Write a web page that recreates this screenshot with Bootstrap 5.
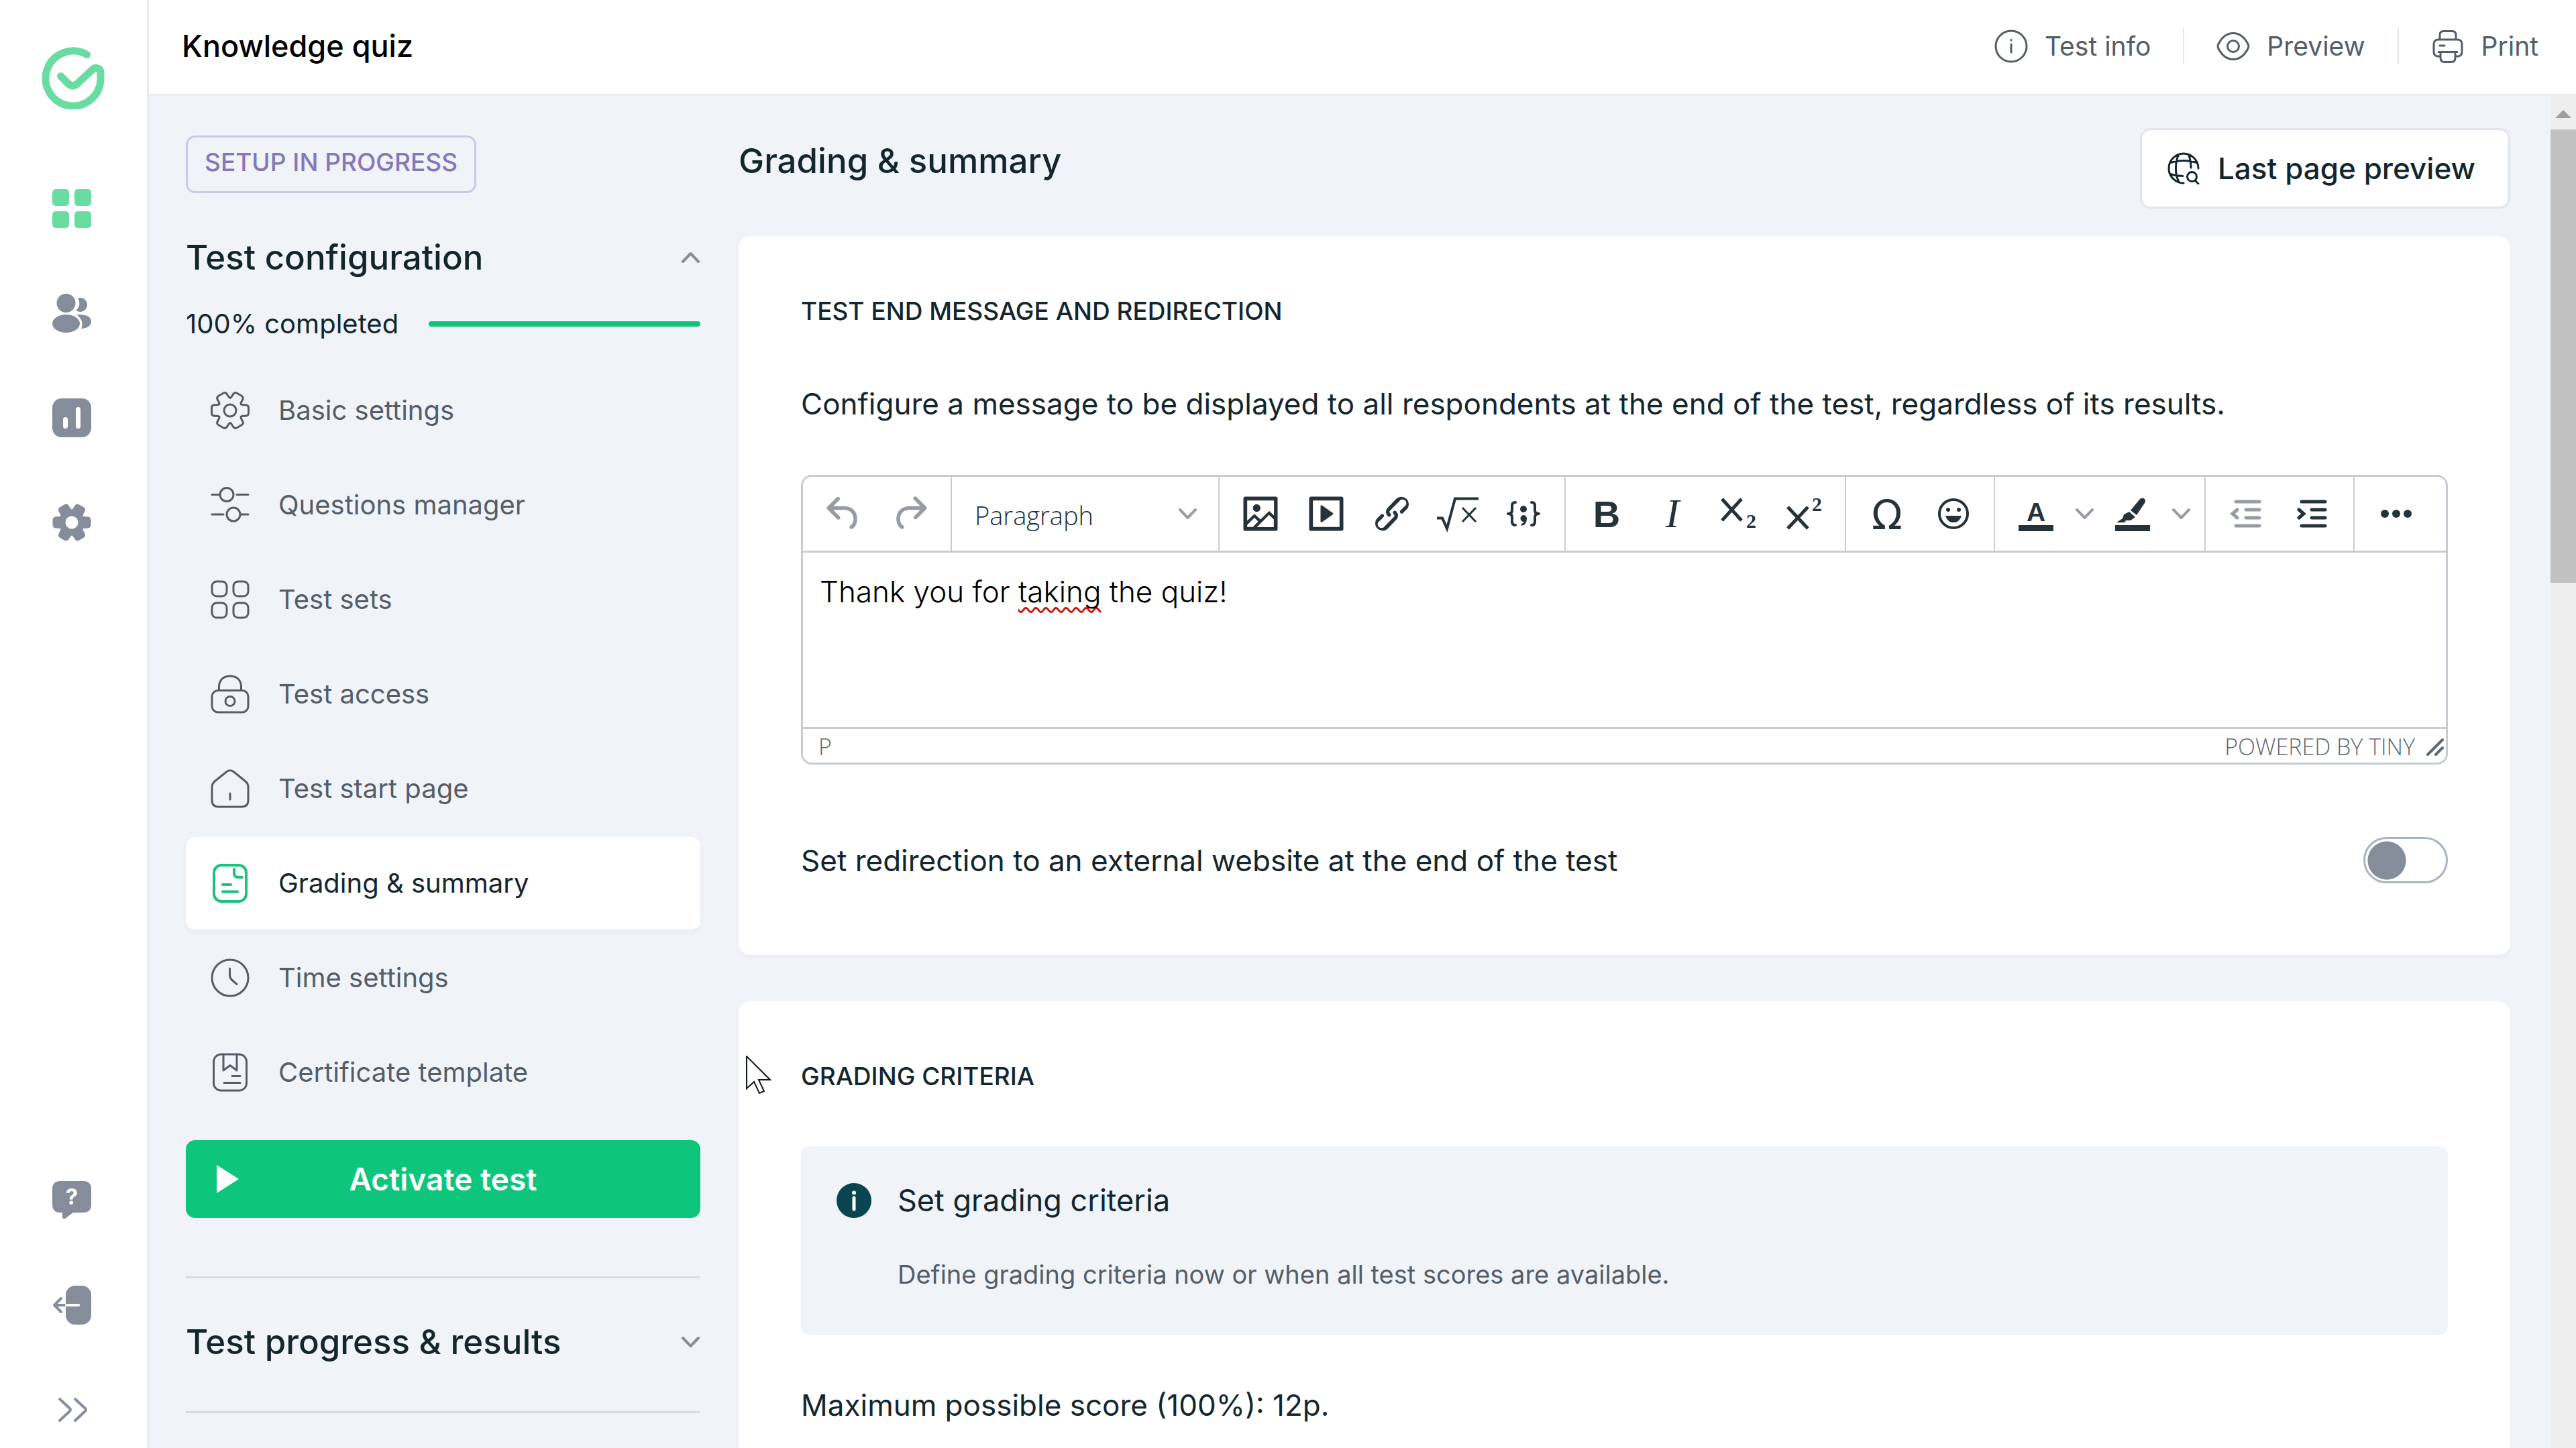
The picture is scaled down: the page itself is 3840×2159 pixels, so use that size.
<!DOCTYPE html>
<html lang="en">
<head>
<meta charset="utf-8">
<meta name="viewport" content="width=device-width, initial-scale=1">
<title>Knowledge quiz – Grading &amp; summary</title>
<link rel="stylesheet" href="https://cdn.jsdelivr.net/npm/bootstrap@5.3.0/dist/css/bootstrap.min.css">
<style>
:root { --ink:#14262d; --muted:#545d68; --grey:#858d9a; --green:#0dc57b; --mint:#69dca1; --page:#f0f4f9; --line:#c8ccd2; }
body { font-family: Inter, "Liberation Sans", sans-serif; font-size: 44px; line-height: 64px; color: var(--ink); background: var(--page); }
a { color: inherit; text-decoration: none; }
svg { display: block; flex: none; }
.ln { fill: none; stroke: currentColor; stroke-width: 3; stroke-linecap: round; stroke-linejoin: round; }

/* icon rail */
.rail { width: 222px; background: #fff; border-right: 3px solid #e9ecef; padding: 70px 0 28px; color: var(--grey); }
.rail-logo { margin-left: 63px; margin-bottom: 119px; color: var(--mint); }
.rail-list { gap: 98px; padding-left: 78px; }
.rail-list a.on { color: var(--mint); }

/* top bar */
.topbar { height: 143px; background: #fff; border-bottom: 3px solid #e9edf2; padding: 0 56px 3px 49px; }
.quiz-name { font-size: 45px; font-weight: 500; line-height: 64px; color: #000; margin: 0; }
.top-links { color: var(--muted); font-size: 39px; gap: 48px; }
.top-links a { gap: 25px; }
.top-links .sep { width: 2px; height: 54px; background: #dfe6ea; }

/* configuration column */
.side { width: 767px; margin: 59px 57px 0 55px; }
.state { border: 3px solid #c6cce5; border-radius: 14px; color: #8577b8; font-size: 37px; font-weight: 500; line-height: 38px; padding: 18px 25px 24px; }
.fold { font-size: 51px; font-weight: 500; line-height: 64px; background: none; border: 0; padding: 0; color: var(--ink); }
.fold svg { color: var(--grey); }
.done { margin-top: 43px; font-size: 40px; line-height: 48px; gap: 45px; }
.done .progress { height: 8px; border-radius: 4px; --bs-progress-bar-bg: #12c57c; background: #dde3ea; }
.menu { margin-top: 36px; gap: 3px; }
.menu a { height: 138px; padding-left: 37px; gap: 43px; border-radius: 14px; color: var(--muted); font-size: 40px; }
.menu a.active { background: #fff; color: var(--ink); box-shadow: 0 4px 10px rgba(30,50,90,.04); }
.menu a.active svg { color: #17c37d; stroke-width: 4; }
.go { height: 116px; margin-top: 32px; border: 0; border-radius: 14px; background: var(--green); color: #fff; font-size: 46px; font-weight: 600; display: grid; grid-template-columns: 45px 1fr 45px; align-items: center; padding: 0 45px 0 45px; }
.rule { height: 3px; background: #d6dde2; }

/* main column */
.work { margin: 48px 60px 0 0; }
.page-title { font-size: 51px; font-weight: 500; line-height: 64px; margin: 17px 0 0; }
.last-page { height: 120px; padding: 0 49px 0 38px; gap: 27px; border: 3px solid #dfe5eb; border-radius: 16px; background: #fff; font-size: 44px; font-weight: 500; color: var(--ink); }
.panel { background: #fff; border-radius: 18px; padding: 80px 93px 107px; box-shadow: 0 5px 6px rgba(60,60,60,.03); }
.panel h2 { font-size: 37px; font-weight: 500; line-height: 64px; margin: 0; }
.panel p { margin: 0; }

/* editor */
.editor { border: 3px solid var(--line); border-radius: 16px; font-family: "Open Sans", "Noto Sans", sans-serif; color: #222f3e; }
.tools { height: 113px; border-bottom: 3px solid var(--line); }
.tools > div { padding: 0 12px; border-right: 2px solid var(--line); color: #25323a; }
.tools > div:last-child { border: 0; }
.tools button { width: 98px; height: 98px; border: 0; background: none; padding: 0; color: inherit; display: flex; align-items: center; justify-content: center; }
.tools button.drop { width: 46px; }
.tools .off, .tools .drop { color: #979ca2; }
.tools select { width: 397px; height: 98px; border: 0; background: none; appearance: none; padding: 4px 34px 0; font-size: 38px; font-weight: 300; color: #222f3e; }
.tools .pick { padding: 0; }
.pick label { display: grid; align-items: center; }
.pick label > * { grid-area: 1 / 1; }
.pick label svg { justify-self: end; margin-right: 31px; color: #979ca2; pointer-events: none; }
.text-area { height: 263px; padding: 26px 25px; font: 300 44px/64px Inter, sans-serif; color: #000; border-bottom: 3px solid var(--line); outline: 0; }
.typo { text-decoration: underline wavy #c4190f 3px; text-underline-offset: 7px; text-decoration-skip-ink: none; }
.status { height: 50px; padding: 2px 2px 0 23px; font-size: 34px; font-weight: 300; line-height: 48px; color: #5e6873; }

.turn { min-height: 69px; }
.turn .form-check-input { width: 126px; height: 69px; margin: 0; border: 3px solid #a9b3c3; border-radius: 35px; background: radial-gradient(circle, #858c9a 28px, transparent 29px) 3px center / 58px 58px no-repeat; }
.note { background: var(--page); border-radius: 14px; padding: 49px 53px 59px; gap: 39px; }
.note svg { margin-top: 6px; }
.note h3 { font-size: 45px; font-weight: 400; line-height: 64px; margin: 0 0 46px; }
.note p { font-size: 38px; color: var(--muted); }

/* scroll bar */
.bar { width: 38px; background: #eee; }
.bar svg { margin: 21px auto 5px; }
.bar .thumb { height: 676px; background: #c1c1c1; }
.pointer-arrow { position: absolute; left: 1112px; top: 1574px; }
</style>
<script src="https://cdn.jsdelivr.net/npm/bootstrap@5.3.0/dist/js/bootstrap.bundle.min.js"></script>
</head>
<body>
<svg width="0" height="0" class="position-absolute" aria-hidden="true">
  <defs>
    <path id="tooth" d="M16.2-9.3Q17.500-8.2 20-8.2H22.500Q27.500-8.2 27.500-4V4Q27.500 8.2 22.500 8.2H20Q17.500 8.2 16.2 9.3"/>
    <path id="wedge" d="M0 0L16.2-9.3Q17.500-8.2 20-8.2H22.500Q28-8.2 28-4V4Q28 8.2 22.500 8.2H20Q17.500 8.2 16.2 9.3Z"/>
    <path id="down" d="M3 3L14.500 15 26 3" fill="none" stroke="currentColor" stroke-width="4" stroke-linecap="round" stroke-linejoin="round"/>
  </defs>
</svg>

<div class="d-flex vh-100 overflow-hidden position-relative">
  <nav class="rail d-flex flex-column flex-shrink-0" aria-label="Main">
    <a class="rail-logo" href="#" aria-label="Home">
      <svg width="93" height="93" viewBox="0 0 93 93" fill="none" stroke="currentColor" stroke-width="11" stroke-linecap="round" stroke-linejoin="round"><path d="M66.500 11.500A41 41 0 1 0 87 46.500V39C87 31 79 29 74 34.500L52 55Q45.500 60.500 39 55L27.500 43.500"/></svg>
    </a>
    <div class="rail-list d-flex flex-column">
      <a class="on" href="#" aria-label="Tests"><svg width="58" height="58" fill="currentColor"><rect width="25" height="25" rx="5"/><rect x="33" width="25" height="25" rx="5"/><rect y="33" width="25" height="25" rx="5"/><rect x="33" y="33" width="25" height="25" rx="5"/></svg></a>
      <a href="#" aria-label="Respondents"><svg width="58" height="58" fill="currentColor"><path d="M38 6.500A10.500 10.500 0 1 1 35.500 25Q44 16 38 6.500ZM36 31Q58 30 58 42 57 51 43 52 48 40 36 31Z"/><circle cx="20.500" cy="14" r="14"/><ellipse cx="20.500" cy="44.500" rx="20.500" ry="13.500"/></svg></a>
      <a href="#" aria-label="Results"><svg width="58" height="58"><rect width="58" height="58" rx="14" fill="currentColor"/><path d="M19.500 31.500V41.500M38.500 16.500V41.500" stroke="#fff" stroke-width="7" stroke-linecap="round"/></svg></a>
      <a href="#" aria-label="Settings"><svg width="58" height="58" viewBox="-29 -29 58 58" fill="currentColor" stroke="currentColor" stroke-width="1"><use href="#wedge"/><use href="#wedge" transform="rotate(60)"/><use href="#wedge" transform="rotate(120)"/><use href="#wedge" transform="rotate(180)"/><use href="#wedge" transform="rotate(240)"/><use href="#wedge" transform="rotate(300)"/><circle r="9.500" fill="#fff" stroke="none"/></svg></a>
    </div>
    <div class="rail-list d-flex flex-column mt-auto">
      <a href="#" aria-label="Help"><svg width="58" height="58"><path d="M12 0H46Q58 0 58 12V35Q58 47 46 47H31L19 56Q15 57 15 53V47H12Q0 47 0 35V12Q0 0 12 0Z" fill="currentColor"/><text x="29" y="35" text-anchor="middle" font-size="33" font-weight="700" fill="#fff">?</text></svg></a>
      <a href="#" aria-label="Log out"><svg width="58" height="58" fill="none" stroke-width="4" stroke-linecap="round" stroke-linejoin="round"><rect x="20" width="38" height="58" rx="14" fill="currentColor"/><path d="M3 29H20M13 19L3 29 13 39" stroke="currentColor"/><path d="M21 29H39" stroke="#fff"/></svg></a>
      <a href="#" aria-label="Expand"><svg width="58" height="58" class="ln"><path d="M11 13L26 27Q28 29 26 31L11 45M34 13L49 27Q51 29 49 31L34 45" stroke-width="4"/></svg></a>
    </div>
  </nav>

  <div class="flex-grow-1 d-flex flex-column" style="min-width:0">
    <header class="topbar d-flex align-items-center justify-content-between flex-shrink-0">
      <h1 class="quiz-name">Knowledge quiz</h1>
      <div class="top-links d-flex align-items-center">
        <a class="d-flex align-items-center" href="#"><svg width="50" height="50" class="ln"><circle cx="25" cy="25" r="23"/><path d="M25 22V34M25 15.500V16"/></svg>Test info</a>
        <span class="sep"></span>
        <a class="d-flex align-items-center" href="#"><svg width="50" height="50" class="ln"><path d="M3 21.500C8 12 15 5.500 25 5.500S42 12 47 21.500Q48.800 25 47 28.500C42 38 35 44.500 25 44.500S8 38 3 28.500Q1.200 25 3 21.500Z"/><circle cx="25" cy="25" r="8.500"/></svg>Preview</a>
        <span class="sep"></span>
        <a class="d-flex align-items-center" href="#"><svg width="50" height="50" class="ln"><path d="M13 40H11Q4 40 4 33V22Q4 15 11 15H39Q46 15 46 22V33Q46 40 39 40H37M13 15V8Q13 2.500 18.500 2.500H31.500Q37 2.500 37 8V15M11 33.500H39M14 34V42Q14 48.500 20 48.500H30Q36 48.500 36 42V34M13 24H20"/></svg>Print</a>
      </div>
    </header>

    <div class="flex-grow-1 d-flex overflow-hidden">
      <aside class="side flex-shrink-0">
        <div class="d-flex"><span class="state">SETUP IN PROGRESS</span></div>
        <button class="fold w-100 d-flex align-items-center justify-content-between" type="button" aria-expanded="true" style="margin-top:64px">Test configuration
          <svg width="29" height="18"><use href="#down" transform="rotate(180 14.500 9)"/></svg></button>
        <div class="done d-flex align-items-center">100% completed
          <div class="progress flex-grow-1" role="progressbar" aria-label="Completed" aria-valuenow="100" aria-valuemin="0" aria-valuemax="100"><div class="progress-bar" style="width:100%"></div></div></div>
        <nav class="menu d-flex flex-column" aria-label="Test configuration">
          <a class="d-flex align-items-center" href="#"><svg width="58" height="58" viewBox="-29 -29 58 58" class="ln"><use href="#tooth"/><use href="#tooth" transform="rotate(60)"/><use href="#tooth" transform="rotate(120)"/><use href="#tooth" transform="rotate(180)"/><use href="#tooth" transform="rotate(240)"/><use href="#tooth" transform="rotate(300)"/><circle r="9"/></svg>Basic settings</a>
          <a class="d-flex align-items-center" href="#"><svg width="58" height="58" class="ln"><circle cx="24" cy="13.500" r="10"/><circle cx="34" cy="43" r="10"/><path d="M2 13.500H13M39 13.500H56M2 43H19M45 43H56"/></svg>Questions manager</a>
          <a class="d-flex align-items-center" href="#"><svg width="58" height="58" class="ln"><rect x="2" y="2" width="22" height="22" rx="7"/><rect x="34" y="2" width="22" height="22" rx="7"/><rect x="2" y="34" width="22" height="22" rx="7"/><rect x="34" y="34" width="22" height="22" rx="7"/></svg>Test sets</a>
          <a class="d-flex align-items-center" href="#"><svg width="58" height="58" class="ln"><rect x="2" y="23.500" width="54" height="32.500" rx="9"/><path d="M12.500 23V18C12.500 8 19 2 29 2S45.500 8 45.500 18V23"/><circle cx="29" cy="39.500" r="7"/></svg>Test access</a>
          <a class="d-flex align-items-center" href="#"><svg width="58" height="58" class="ln"><path d="M2 27V46Q2 56 12 56H46Q56 56 56 46V27Q56 21.500 52 18L34 3.500Q29 0 24 3.500L6 18Q2 21.500 2 27ZM29 36V45"/></svg>Test start page</a>
          <a class="d-flex align-items-center active" href="#" aria-current="page"><svg width="58" height="58" class="ln"><rect x="5" y="2" width="48" height="54" rx="11"/><path d="M35 8V14Q35 20 41 20H47M18 31H30M18 41.500H40"/></svg>Grading &amp; summary</a>
          <a class="d-flex align-items-center" href="#"><svg width="58" height="58" class="ln"><circle cx="29" cy="29" r="27"/><path d="M28.500 15V25Q28.500 29 31.500 32L39 38.500"/></svg>Time settings</a>
          <a class="d-flex align-items-center" href="#"><svg width="58" height="58" class="ln"><rect x="4.500" y="2" width="49" height="54" rx="11"/><path d="M19 2V26L29 18.500 39 26V2M32 34.500H44M20 44.500H44"/></svg>Certificate template</a>
        </nav>
        <button class="go w-100" type="button"><svg width="34" height="42"><path d="M1 0L34 21 1 42Z" fill="#fff"/></svg><span>Activate test</span></button>
        <div class="rule" style="margin-top:87px"></div>
        <button class="fold w-100 d-flex align-items-center justify-content-between" type="button" aria-expanded="false" style="margin:63px 0 71px">Test progress &amp; results
          <svg width="29" height="18"><use href="#down"/></svg></button>
        <div class="rule"></div>
      </aside>

      <main class="work flex-grow-1">
        <div class="d-flex justify-content-between align-items-start">
          <h2 class="page-title">Grading &amp; summary</h2>
          <button class="last-page d-flex align-items-center" type="button"><svg width="48" height="48" class="ln"><path d="M46 24A22 22 0 1 0 24 46M16.500 4C11 16 11 33 17 44M31.500 4Q35 12 35 23M4 15.500Q24 9.500 44 15.500M4 32.500Q13 35.500 23 35.500M41.500 42.500L46 47"/><circle cx="36.500" cy="36.500" r="7"/></svg>Last page preview</button>
        </div>

        <section class="panel" style="margin-top:41px">
          <h2>TEST END MESSAGE AND REDIRECTION</h2>
          <p style="margin:74px 0">Configure a message to be displayed to all respondents at the end of the test, regardless of its results.</p>
          <div class="editor">
            <div class="tools d-flex">
              <div class="d-flex align-items-center off">
                <button type="button" aria-label="Undo"><svg width="68" height="68" viewBox="0 0 24 24" fill="currentColor"><path d="M6.400 8H12c3.700 0 6.200 2 6.800 5.100.600 2.700-.4 5.600-2.300 6.800a1 1 0 0 1-1-1.800c1.100-.6 1.800-2.700 1.400-4.600-.5-2.100-2.100-3.500-4.900-3.500H6.400l3.300 3.300a1 1 0 1 1-1.400 1.400l-5-5a1 1 0 0 1 0-1.400l5-5a1 1 0 0 1 1.400 1.400L6.400 8Z"/></svg></button>
                <button type="button" aria-label="Redo"><svg width="68" height="68" viewBox="0 0 24 24" fill="currentColor"><path d="M17.600 10H12c-2.800 0-4.400 1.400-4.900 3.500-.4 2 .3 4 1.400 4.600a1 1 0 1 1-1 1.800c-2-1.200-2.900-4.100-2.300-6.800.6-3 3-5.100 6.800-5.100h5.600l-3.300-3.300a1 1 0 1 1 1.400-1.400l5 5a1 1 0 0 1 0 1.400l-5 5a1 1 0 0 1-1.400-1.400l3.300-3.300Z"/></svg></button>
              </div>
              <div class="d-flex align-items-center pick"><label><select aria-label="Block format"><option>Paragraph</option></select><svg width="29" height="18"><use href="#down"/></svg></label></div>
              <div class="d-flex align-items-center">
                <button type="button" aria-label="Image"><svg width="68" height="68" viewBox="0 0 24 24" fill="currentColor"><path d="m5 15.700 3.300-3.200c.3-.3.700-.3 1 0L12 15l4.100-4c.3-.4.800-.4 1 0l2 1.900V5H5v10.700ZM5 18V19h3l2.800-2.900-2-2L5 17.900Zm14-3-2.500-2.400-6.400 6.500H19v-4ZM4 3h16c.6 0 1 .4 1 1v16c0 .6-.4 1-1 1H4a1 1 0 0 1-1-1V4c0-.6.4-1 1-1Zm6 8a2 2 0 1 0 0-4 2 2 0 0 0 0 4Z"/></svg></button>
                <button type="button" aria-label="Media"><svg width="68" height="68" viewBox="0 0 24 24" fill="currentColor" fill-rule="evenodd"><path d="M4 3h16c.6 0 1 .4 1 1v16c0 .6-.4 1-1 1H4a1 1 0 0 1-1-1V4c0-.6.4-1 1-1Zm1 2v14h14V5H5Zm4.800 2.600 5.600 4a.5.5 0 0 1 0 .8l-5.600 4A.5.5 0 0 1 9 16V8a.5.5 0 0 1 .8-.4Z"/></svg></button>
                <button type="button" aria-label="Link"><svg width="68" height="68" viewBox="0 0 24 24" fill="currentColor"><path d="M6.200 12.300a1 1 0 0 1 1.400 1.400l-2 2a2 2 0 1 0 2.600 2.800l4.800-4.800a1 1 0 0 0 0-1.400 1 1 0 1 1 1.400-1.300 2.900 2.900 0 0 1 0 4L9.600 20a3.900 3.900 0 0 1-5.500-5.500l2-2Zm11.600-.6a1 1 0 0 1-1.400-1.400l2-2a2 2 0 1 0-2.600-2.800L11 10.300a1 1 0 0 0 0 1.400A1 1 0 1 1 9.600 13a2.900 2.900 0 0 1 0-4L14.400 4a3.900 3.900 0 0 1 5.500 5.500l-2 2Z"/></svg></button>
                <button type="button" aria-label="Formula"><svg width="68" height="68" fill="none" stroke="currentColor" stroke-width="3"><path d="M3 40.500H11L18 56 30 11.500H65" stroke-width="4"/><path d="M41 25L61 46M61 25L41 46"/></svg></button>
                <button type="button" aria-label="Code sample"><svg width="68" height="68" class="ln"><g stroke-width="4"><path d="M22 17Q17 17 17 22V29Q17 34 11 34 17 34 17 39V46Q17 51 22 51M46 17Q51 17 51 22V29Q51 34 57 34 51 34 51 39V46Q51 51 46 51"/></g><g fill="currentColor" stroke="none"><circle cx="34" cy="27" r="5"/><path d="M34 36A5 5 0 0 1 39 41Q39 51 31 52V49Q34 48 35 46A5 5 0 0 1 34 36Z"/></g></svg></button>
              </div>
              <div class="d-flex align-items-center">
                <button type="button" aria-label="Bold"><svg width="68" height="68" fill="currentColor"><text x="34" y="54" text-anchor="middle" font-family="Liberation Sans" font-weight="700" font-size="56">B</text></svg></button>
                <button type="button" aria-label="Italic"><svg width="68" height="68" fill="currentColor"><text x="34" y="54" text-anchor="middle" font-family="Liberation Serif" font-style="italic" font-size="62">I</text></svg></button>
                <button type="button" aria-label="Subscript"><svg width="68" height="68" fill="none" stroke="currentColor" stroke-width="5"><path d="M10 12L39 44M39 12L10 44"/><text x="46" y="55" fill="currentColor" stroke="none" font-family="Liberation Serif" font-weight="700" font-size="30">2</text></svg></button>
                <button type="button" aria-label="Superscript"><svg width="68" height="68" fill="none" stroke="currentColor" stroke-width="5"><path d="M10 24L40 56M40 24L10 56"/><text x="46" y="30" fill="currentColor" stroke="none" font-family="Liberation Serif" font-weight="700" font-size="30">2</text></svg></button>
              </div>
              <div class="d-flex align-items-center">
                <button type="button" aria-label="Special character"><svg width="84" height="98" fill="currentColor"><text x="42" y="72" text-anchor="middle" font-family="DejaVu Sans" font-size="60">Ω</text></svg></button>
                <button type="button" aria-label="Emojis"><svg width="68" height="68" fill="currentColor"><circle cx="35" cy="34" r="21" fill="none" stroke="currentColor" stroke-width="4"/><circle cx="27" cy="28" r="3"/><circle cx="43" cy="28" r="3"/><path d="M23 37H47Q44 47 35 47T23 37Z"/></svg></button>
              </div>
              <div class="d-flex align-items-center">
                <button type="button" aria-label="Text color"><svg width="68" height="68" fill="currentColor"><text x="34" y="45" text-anchor="middle" font-family="Liberation Sans" font-weight="700" font-size="39">A</text><path d="M8 51H60V60H8Z"/></svg></button>
                <button class="drop" type="button" aria-label="Text colors"><svg width="29" height="18"><use href="#down"/></svg></button>
                <button type="button" aria-label="Highlight"><svg width="68" height="68" fill="currentColor"><path d="M8 51H60V60H8ZM31 29L45 12Q49 9 52 12 54 15 52 18L40 36ZM29 31L38 39 31 44 24 44 22 47H10L19 41 21 35Z"/></svg></button>
                <button class="drop" type="button" aria-label="Highlight colors"><svg width="29" height="18"><use href="#down"/></svg></button>
              </div>
              <div class="d-flex align-items-center">
                <button class="off" type="button" aria-label="Decrease indent"><svg width="68" height="68" fill="none" stroke="currentColor" stroke-width="5" stroke-linecap="round"><path d="M18 16H53M33 28H53M33 40H53M18 52H53M20 28L13 34 20 40"/></svg></button>
                <button type="button" aria-label="Increase indent"><svg width="68" height="68" fill="none" stroke="currentColor" stroke-width="5" stroke-linecap="round"><path d="M18 16H53M33 28H53M33 40H53M18 52H53M14 28L21 34 14 40"/></svg></button>
              </div>
              <div class="d-flex align-items-center"><button type="button" aria-label="More"><svg width="68" height="68" fill="currentColor"><circle cx="18" cy="34" r="6"/><circle cx="35" cy="34" r="6"/><circle cx="52" cy="34" r="6"/></svg></button></div>
            </div>
            <div class="text-area" role="textbox" aria-multiline="true" aria-label="End message" contenteditable="true" spellcheck="false">Thank you for <span class="typo">taking</span> the quiz!</div>
            <div class="status d-flex align-items-center justify-content-between"><span>P</span>
              <div class="d-flex align-items-center gap-3"><a href="#">POWERED BY TINY</a><svg width="28" height="28" fill="none" stroke="#5e6873" stroke-width="4" stroke-linecap="round"><path d="M3 26L25 4M15 26L25 16"/></svg></div></div>
          </div>
          <div class="turn d-flex align-items-center justify-content-between" style="margin-top:108px">
            <label for="redir">Set redirection to an external website at the end of the test</label>
            <input class="form-check-input" type="checkbox" role="switch" id="redir">
          </div>
        </section>

        <section class="panel" style="margin-top:69px">
          <h2>GRADING CRITERIA</h2>
          <div class="note d-flex" style="margin:72px 0">
            <svg width="52" height="52"><circle cx="26" cy="26" r="26" fill="#08454f"/><path d="M26 22V39" stroke="#fff" stroke-width="5" stroke-linecap="round"/><circle cx="26" cy="14.500" r="3" fill="#fff"/></svg>
            <div><h3>Set grading criteria</h3><p>Define grading criteria now or when all test scores are available.</p></div>
          </div>
          <p>Maximum possible score (100%): 12p.</p>
        </section>
      </main>

      <div class="bar flex-shrink-0" aria-hidden="true"><svg width="24" height="24"><path d="M12 0L24 12H0Z" fill="#9d9fa1"/></svg><div class="thumb"></div></div>
    </div>
  </div>
  <svg class="pointer-arrow" width="38" height="60" aria-hidden="true"><path d="M1 1V49L12 39 20 56 27 53 19 36 36 36Z" fill="#fff" stroke="#14181c" stroke-width="2"/></svg>
</div>
</body>
</html>
